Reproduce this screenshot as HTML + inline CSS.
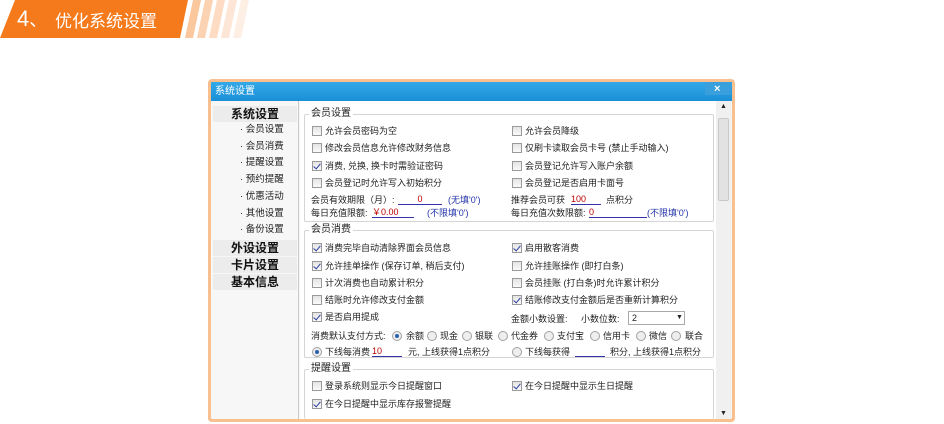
<!DOCTYPE html>
<html><head><meta charset="utf-8"><style>
*{margin:0;padding:0;box-sizing:border-box}
body{width:944px;height:424px;background:#fff;position:relative;overflow:hidden;font-family:"Liberation Sans","Noto Sans CJK SC","WenQuanYi Zen Hei",sans-serif;font-size:9px;color:#222}
.a{position:absolute;white-space:nowrap;line-height:12px}
.cb{position:absolute;width:10px;height:10px;border:1px solid #9a9a9a;background:linear-gradient(#e4e4e4,#fafafa)}
.cb.c::after{content:"";position:absolute;left:2px;top:0px;width:3px;height:6px;border:solid #2a3f9a;border-width:0 1.5px 1.5px 0;transform:rotate(40deg)}
.rd{position:absolute;width:10px;height:10px;border:1px solid #a0a0a0;border-radius:50%;background:#eee}
.rd.c::after{content:"";position:absolute;left:2px;top:2px;width:4px;height:4px;border-radius:50%;background:#2e5fb0}
.gb{position:absolute;border:1px solid #d5d5d5;border-radius:2px}
.gl{position:absolute;background:#fff;padding:0 2px;line-height:12px;font-size:10px}
.ul{position:absolute;border-bottom:1px solid #3333aa;height:12px;color:#b00;font-size:9px;line-height:12px}
.blue{color:#2233aa}
.sb{position:absolute;left:213px;width:84px;height:16px;background:#ececec;text-align:center;font-weight:bold;font-size:12px;line-height:16px;color:#111}
.si{position:absolute;left:240px;line-height:12px;font-size:9.5px}
</style></head><body>
<svg style="position:absolute;left:0;top:0" width="250" height="40">
<polygon points="15,0 188,0 180,38 0,38" fill="#f47a1c"/>
<polygon points="193,0 201,0 193,38 185,38" fill="#fbc79d"/>
<polygon points="205,0 213,0 205,38 197,38" fill="#fcd3b2"/>
<polygon points="217,0 225,0 217,38 209,38" fill="#fddcc3"/>
<polygon points="229,0 237,0 229,38 221,38" fill="#fde6d5"/>
<polygon points="241,0 249,0 241,38 233,38" fill="#feefe5"/>
</svg>
<div class="a" style="left:17px;top:6px;color:#fff;font-size:22px;line-height:26px">4<span style="font-size:18px">、</span></div>
<div class="a" style="left:55px;top:10px;color:#fff;font-size:17px;line-height:20px;font-family:'Noto Sans CJK SC',sans-serif">优化系统设置</div>

<div style="position:absolute;left:208px;top:79px;width:527px;height:343px;border:3px solid #f9bf8f;border-radius:4px;background:#f4f4f4"></div>
<div style="position:absolute;left:211px;top:82px;width:521px;height:19px;background:linear-gradient(#33a9e8,#1a8fd6)"></div>
<div class="a" style="left:215px;top:86px;color:#fff;font-size:10px">系统设置</div>
<div style="position:absolute;left:705px;top:82px;width:26px;height:13px;background:#3aa0dd"></div>
<div class="a" style="left:714px;top:83px;color:#fff;font-size:11px;font-weight:bold">×</div>
<div style="position:absolute;left:211px;top:101px;width:88px;height:318px;background:#f7f7f7;border-right:1px solid #ccc"></div>
<div style="position:absolute;left:300px;top:101px;width:416px;height:318px;background:#fff"></div>
<div style="position:absolute;left:716px;top:101px;width:15px;height:318px;background:#f0f0f0"></div>
<div style="position:absolute;left:718px;top:118px;width:11px;height:83px;background:#e2e2e2;border:1px solid #c8c8c8;border-radius:2px"></div>
<div class="a" style="left:720px;top:101px;font-size:7px">▲</div>
<div class="a" style="left:720px;top:408px;font-size:7px">▼</div>

<div class="sb" style="top:106px">系统设置</div>
<div class="si" style="top:124px">· 会员设置</div>
<div class="si" style="top:141px">· 会员消费</div>
<div class="si" style="top:157px">· 提醒设置</div>
<div class="si" style="top:174px">· 预约提醒</div>
<div class="si" style="top:191px">· 优惠活动</div>
<div class="si" style="top:208px">· 其他设置</div>
<div class="si" style="top:224px">· 备份设置</div>
<div class="sb" style="top:240px">外设设置</div>
<div class="sb" style="top:257px">卡片设置</div>
<div class="sb" style="top:274px">基本信息</div>

<div class="gb" style="left:304px;top:114px;width:410px;height:108px"></div>
<div class="gl" style="left:309px;top:108px">会员设置</div>
<div class="cb" style="left:312px;top:126px"></div><div class="a" style="left:325px;top:125px">允许会员密码为空</div>
<div class="cb" style="left:512px;top:126px"></div><div class="a" style="left:525px;top:125px">允许会员降级</div>
<div class="cb" style="left:312px;top:143px"></div><div class="a" style="left:325px;top:142px">修改会员信息允许修改财务信息</div>
<div class="cb" style="left:512px;top:143px"></div><div class="a" style="left:525px;top:142px">仅刷卡读取会员卡号 (禁止手动输入)</div>
<div class="cb c" style="left:312px;top:161px"></div><div class="a" style="left:325px;top:160px">消费, 兑换, 换卡时需验证密码</div>
<div class="cb" style="left:512px;top:161px"></div><div class="a" style="left:525px;top:160px">会员登记允许写入账户余额</div>
<div class="cb" style="left:312px;top:178px"></div><div class="a" style="left:325px;top:177px">会员登记时允许写入初始积分</div>
<div class="cb" style="left:512px;top:178px"></div><div class="a" style="left:525px;top:177px">会员登记是否启用卡面号</div>
<div class="a" style="left:311px;top:194px">会员有效期限（月）:</div>
<div class="ul" style="left:398px;top:193px;width:44px;text-align:center">0</div>
<div class="a blue" style="left:448px;top:194px">(无填'0')</div>
<div class="a" style="left:511px;top:194px">推荐会员可获</div>
<div class="ul" style="left:571px;top:193px;width:30px">100</div>
<div class="a" style="left:606px;top:194px">点积分</div>
<div class="a" style="left:311px;top:207px">每日充值限额:</div>
<div class="ul" style="left:372px;top:206px;width:42px">￥0.00</div>
<div class="a blue" style="left:427px;top:207px">(不限填'0')</div>
<div class="a" style="left:511px;top:207px">每日充值次数限额:</div>
<div class="ul" style="left:589px;top:206px;width:58px">0</div>
<div class="a blue" style="left:647px;top:207px">(不限填'0')</div>

<div class="gb" style="left:304px;top:230px;width:410px;height:128px"></div>
<div class="gl" style="left:309px;top:224px">会员消费</div>
<div class="cb c" style="left:312px;top:243px"></div><div class="a" style="left:325px;top:242px">消费完毕自动清除界面会员信息</div>
<div class="cb c" style="left:512px;top:243px"></div><div class="a" style="left:525px;top:242px">启用散客消费</div>
<div class="cb c" style="left:312px;top:261px"></div><div class="a" style="left:325px;top:260px">允许挂单操作 (保存订单, 稍后支付)</div>
<div class="cb" style="left:512px;top:261px"></div><div class="a" style="left:525px;top:260px">允许挂账操作 (即打白条)</div>
<div class="cb" style="left:312px;top:278px"></div><div class="a" style="left:325px;top:277px">计次消费也自动累计积分</div>
<div class="cb" style="left:512px;top:278px"></div><div class="a" style="left:525px;top:277px">会员挂账 (打白条)时允许累计积分</div>
<div class="cb" style="left:312px;top:295px"></div><div class="a" style="left:325px;top:294px">结账时允许修改支付金额</div>
<div class="cb c" style="left:512px;top:295px"></div><div class="a" style="left:525px;top:294px">结账修改支付金额后是否重新计算积分</div>
<div class="cb c" style="left:312px;top:312px"></div><div class="a" style="left:325px;top:311px">是否启用提成</div>
<div class="a" style="left:511px;top:313px">金额小数设置:</div>
<div class="a" style="left:581px;top:313px">小数位数:</div>
<div style="position:absolute;left:628px;top:311px;width:57px;height:14px;border:1px solid #aaa;background:#fff"></div>
<div class="a" style="left:632px;top:312px">2</div>
<div class="a" style="left:676px;top:312px;font-size:7px">▼</div>
<div class="a" style="left:311px;top:330px">消费默认支付方式:</div>
<div class="rd c" style="left:392px;top:331px"></div><div class="a" style="left:406px;top:330px">余额</div>
<div class="rd" style="left:427px;top:331px"></div><div class="a" style="left:440px;top:330px">现金</div>
<div class="rd" style="left:462px;top:331px"></div><div class="a" style="left:475px;top:330px">银联</div>
<div class="rd" style="left:498px;top:331px"></div><div class="a" style="left:511px;top:330px">代金券</div>
<div class="rd" style="left:544px;top:331px"></div><div class="a" style="left:557px;top:330px">支付宝</div>
<div class="rd" style="left:590px;top:331px"></div><div class="a" style="left:603px;top:330px">信用卡</div>
<div class="rd" style="left:636px;top:331px"></div><div class="a" style="left:649px;top:330px">微信</div>
<div class="rd" style="left:671px;top:331px"></div><div class="a" style="left:685px;top:330px">联合</div>
<div class="rd c" style="left:312px;top:347px"></div><div class="a" style="left:325px;top:346px">下线每消费</div>
<div class="ul" style="left:372px;top:345px;width:30px">10</div>
<div class="a" style="left:408px;top:346px">元, 上线获得1点积分</div>
<div class="rd" style="left:512px;top:347px"></div><div class="a" style="left:525px;top:346px">下线每获得</div>
<div class="ul" style="left:575px;top:345px;width:30px"></div>
<div class="a" style="left:610px;top:346px">积分, 上线获得1点积分</div>

<div class="gb" style="left:304px;top:369px;width:410px;height:50px;border-bottom:none"></div>
<div class="gl" style="left:309px;top:363px">提醒设置</div>
<div class="cb" style="left:312px;top:381px"></div><div class="a" style="left:325px;top:380px">登录系统则显示今日提醒窗口</div>
<div class="cb c" style="left:512px;top:381px"></div><div class="a" style="left:525px;top:380px">在今日提醒中显示生日提醒</div>
<div class="cb c" style="left:312px;top:399px"></div><div class="a" style="left:325px;top:398px">在今日提醒中显示库存报警提醒</div>
<div style="position:absolute;left:208px;top:416px;width:527px;height:6px;border:3px solid #f9bf8f;border-top:none;border-radius:0 0 4px 4px"></div>
</body></html>
